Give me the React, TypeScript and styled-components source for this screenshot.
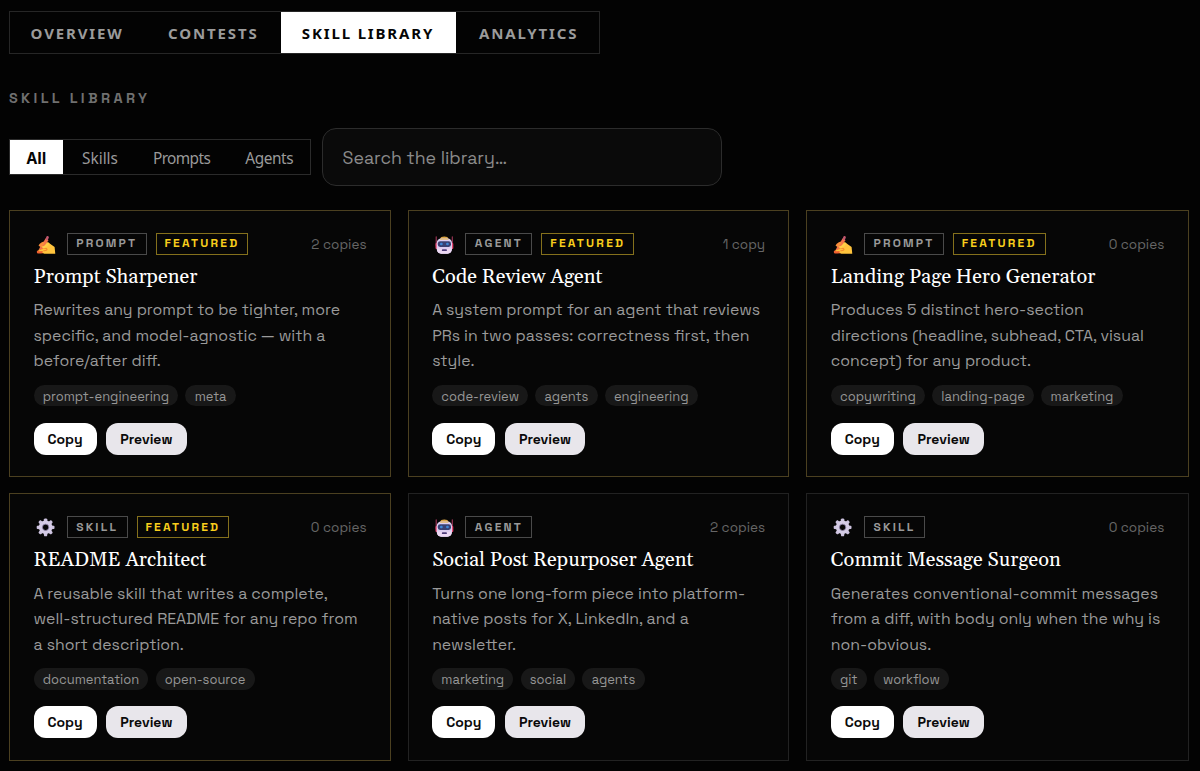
import React, { useState } from 'react';
import styled, { createGlobalStyle, css } from 'styled-components';

const grotesk = '"Space Grotesk", Inter, sans-serif';
const humanist = '"Noto Sans", "Open Sans", sans-serif';
const serif = 'Gelasio, Georgia, "Liberation Serif", serif';

const GlobalStyle = createGlobalStyle`
  * { box-sizing: border-box; }
  body { margin: 0; background: #030303; font-family: ${grotesk}; overflow: hidden; }
  button { font: inherit; border: 0; padding: 0; cursor: pointer; }
`;

const Page = styled.main`
  padding: 11px 0 10px 9px;
  height: 771px;
  background: #030303;
`;

const TabBar = styled.nav`
  display: flex;
  width: fit-content;
  height: 43px;
  border: 1px solid #262626;
`;

const Tab = styled.button<{ $active: boolean; $width: number; $inset: number }>`
  width: ${(p) => p.$width}px;
  padding: 1px 0 0 ${(p) => p.$inset}px;
  text-align: left;
  white-space: nowrap;
  font: 700 15px/1 ${humanist};
  letter-spacing: 1.85px;
  color: ${(p) => (p.$active ? '#050505' : '#9b9b9b')};
  background: ${(p) => (p.$active ? '#fff' : 'transparent')};
`;

const SectionLabel = styled.h2`
  margin: 34px 0 0;
  height: 20px;
  font: 600 14.4px/20px ${grotesk};
  letter-spacing: 3.38px;
  color: #707070;
`;

const Controls = styled.div`
  display: flex;
  align-items: center;
  gap: 11px;
  margin-top: 20px;
  height: 58px;
`;

const Segments = styled.div`
  display: flex;
  height: 36px;
  width: 302px;
  border: 1px solid #2b2b2b;
`;

const Segment = styled.button<{ $active: boolean; $track: number }>`
  flex: none;
  padding: 4px 17.5px 0;
  font: ${(p) => (p.$active ? 700 : 400)} 15.4px/1 ${humanist};
  letter-spacing: ${(p) => p.$track}px;
  color: ${(p) => (p.$active ? '#050505' : '#9a9a9a')};
  background: ${(p) => (p.$active ? '#fff' : 'transparent')};
  &:first-child {
    width: 53px;
    padding-left: 16px;
    padding-right: 16px;
    margin-right: 1.5px;
  }
`;

const Search = styled.input`
  width: 400px;
  height: 58px;
  padding: 2px 19px 0 19.5px;
  margin: 0;
  border: 1px solid #2c2c2c;
  border-radius: 14px;
  outline: 0;
  background: #0a0a0a;
  color: #ddd;
  font: 400 17.75px/1.3 ${grotesk};
  &::placeholder { color: #8b8b8b; opacity: 1; }
`;

const Grid = styled.section`
  display: grid;
  grid-template-columns: 381.9px 381.9px 382.4px;
  grid-auto-rows: 267.3px;
  gap: 16px 16.75px;
  margin: 24.2px 0 0 -0.1px;
`;

const Card = styled.article<{ $featured: boolean }>`
  padding: 21.8px 23.3px 0 23.6px;
  border: 1px solid ${(p) => (p.$featured ? '#4b4020' : '#222')};
  background: #060606;
`;

const CardHead = styled.header`
  display: flex;
  align-items: center;
  height: 22px;
`;

const IconSlot = styled.span`
  display: flex;
  width: 33.2px;
  padding: 2px 0 0 2.4px;
`;

const badge = css`
  display: flex;
  align-items: center;
  height: 22px;
  font: 700 12px/1 ${grotesk};
`;

const Kind = styled.span`
  ${badge}
  padding: 0 8.4px 1px 8.5px;
  border: 1px solid #4a4a4a;
  color: #999;
  letter-spacing: 2.2px;
`;

const Featured = styled.span`
  ${badge}
  padding: 0 7.9px 1px 7.9px;
  margin-left: 9px;
  border: 1px solid #84701c;
  color: #f8ce1c;
  letter-spacing: 2.2px;
`;

const Copies = styled.span`
  margin-left: auto;
  padding-top: 1px;
  font-size: 13.5px;
  color: #666;
`;

const Title = styled.h3`
  margin: 7.7px 0 0;
  font: 400 20px/28px ${serif};
  color: #fff;
`;

const Description = styled.p`
  margin: 6.6px -10px 0 0;
  font-size: 15.87px;
  line-height: 25.5px;
  color: #9a9a9a;
  white-space: pre-line;
`;

const Tags = styled.div`
  display: flex;
  gap: 7.2px;
  margin-top: 11.2px;
`;

const Tag = styled.span`
  height: 21.5px;
  padding: 0 9.2px;
  border-radius: 11px;
  background: #181818;
  color: #969696;
  font-size: 12.95px;
  line-height: 23px;
`;

const Actions = styled.div`
  display: flex;
  gap: 9.3px;
  margin-top: 16.4px;
`;

const Action = styled.button<{ $primary?: boolean }>`
  height: 32px;
  padding: 0 ${(p) => (p.$primary ? 14 : 14.4)}px;
  border-radius: 12px;
  background: ${(p) => (p.$primary ? '#fff' : '#e8e6eb')};
  color: #0a0a0a;
  font: 700 14px/32px ${grotesk};
`;

const WritingHand = () => (
  <svg width="20" height="20" viewBox="0 0 20 20" aria-hidden="true">
    <path d="M1.200 15.700c2.600-.9 3.600-.3 5.200-.2 1.500.1 2.300-.5 3.800-.4l1 2.500c-3.400.9-6.600 1.300-9.500.8-.9-.2-1.200-2.200-.5-2.700z" fill="#f0602f" />
    <path d="M6.700 8.100c2.300-1.400 4.500-1.500 6.300-.2l5.600 4.200.7 6.600H9.500c-1.500 0-3-.6-3.200-1.500-.1-.6.300-1 .9-1.200l-3.400.3c-1.700 0-1.800-1.400-.3-1.900l3.300-1.300z" fill="#ffc43d" />
    <path d="M3.200 14.700c2.100-.2 3.500-1.300 5.100-1.500 1.600-.2 2.800.4 2.700 1.400-.1.900-1.700 1-3.200 1.200" fill="none" stroke="#f58b2d" strokeWidth="1.100" strokeLinecap="round" />
    <path d="M3.400 13.300 9.600 3.500l2.900 1.800-5.800 8.200-3.500 1.800z" fill="#f3744a" />
    <path d="m9.400 3.900 1.300-2.600c.8-1 2.500 0 2.100 1.200l-1.100 2.900z" fill="#c0576e" />
    <path d="M2.600 10.800c.4-1.600 3-4 4.600-4.100 1.400.1 1.600 1.500.6 2.500L5 12.200z" fill="#f98d3b" />
    <path d="M5.500 11.400c2.200-.2 4.300-1.500 5.800-3.500 1.300-1 2.500.2 1.800 1.400-1.300 2.200-3.500 3.600-5.900 4.300" fill="#ffcf48" />
  </svg>
);

const Robot = () => (
  <svg width="20" height="20" viewBox="0 0 20 20" aria-hidden="true">
    <path d="M1.200 1.800v9M17.300 1.800v9" stroke="#a2375a" strokeWidth="1.100" strokeLinecap="round" />
    <rect x=".5" y="8" width="2.400" height="6" rx="1" fill="#e8456f" />
    <rect x="15.900" y="8" width="2.400" height="6" rx="1" fill="#e8456f" />
    <path d="M5 4.300C5.400 2 6.800 1.400 9.300 1.400s3.900.6 4.300 2.900z" fill="#d9a545" />
    <rect x="1.700" y="3.400" width="15.300" height="15.300" rx="4.600" fill="#dccdf0" />
    <path d="M5.200 3.800h8.200v1H5.200z" fill="#e3bd72" />
    <path d="M2 13.300c1.500 1 13.200 1 14.700 0v1.300c0 2.600-1.600 4.100-4.200 4.100H6.200C3.600 18.700 2 17.200 2 14.600z" fill="#edd9f4" />
    <rect x="2.800" y="6.300" width="13.200" height="5.600" rx="2.300" fill="#394173" />
    <rect x="5" y="7.800" width="2.700" height="2.500" rx="1.100" fill="#3c86d6" />
    <rect x="11.100" y="7.800" width="2.700" height="2.500" rx="1.100" fill="#3c86d6" />
    <rect x="6.900" y="14.200" width="5" height="1.900" rx=".7" fill="#4e3c79" />
  </svg>
);

const teeth = [0, 45, 90, 135, 180, 225, 270, 315];

const Gear = () => (
  <svg width="20" height="20" viewBox="0 0 20 20" aria-hidden="true">
    {teeth.map((a) => (
      <path key={a} d="M7.500 5 8 1.200c.1-.6.500-.8 1-.8h1.200c.5 0 .9.200 1 .8l.5 3.800z" fill="#cdc3df" transform={`rotate(${a} 9.600 9.300)`} />
    ))}
    <circle cx="9.600" cy="9.300" r="4.900" fill="none" stroke="#d5cce6" strokeWidth="3.600" />
    <circle cx="9.600" cy="9.300" r="3.200" fill="none" stroke="#8f83a8" strokeWidth=".8" />
  </svg>
);

type KindName = 'PROMPT' | 'AGENT' | 'SKILL';
const icons: Record<KindName, React.FC> = { PROMPT: WritingHand, AGENT: Robot, SKILL: Gear };

interface Item {
  kind: KindName;
  featured?: boolean;
  copies: string;
  title: string;
  text: string;
  tags: string[];
}

const items: Item[] = [
  { kind: 'PROMPT', featured: true, copies: '2 copies', title: 'Prompt Sharpener', text: 'Rewrites any prompt to be tighter, more\nspecific, and model-agnostic — with a\nbefore/after diff.', tags: ['prompt-engineering', 'meta'] },
  { kind: 'AGENT', featured: true, copies: '1 copy', title: 'Code Review Agent', text: 'A system prompt for an agent that reviews\nPRs in two passes: correctness first, then\nstyle.', tags: ['code-review', 'agents', 'engineering'] },
  { kind: 'PROMPT', featured: true, copies: '0 copies', title: 'Landing Page Hero Generator', text: 'Produces 5 distinct hero-section\ndirections (headline, subhead, CTA, visual\nconcept) for any product.', tags: ['copywriting', 'landing-page', 'marketing'] },
  { kind: 'SKILL', featured: true, copies: '0 copies', title: 'README Architect', text: 'A reusable skill that writes a complete,\nwell-structured README for any repo from\na short description.', tags: ['documentation', 'open-source'] },
  { kind: 'AGENT', copies: '2 copies', title: 'Social Post Repurposer Agent', text: 'Turns one long-form piece into platform-\nnative posts for X, LinkedIn, and a\nnewsletter.', tags: ['marketing', 'social', 'agents'] },
  { kind: 'SKILL', copies: '0 copies', title: 'Commit Message Surgeon', text: 'Generates conventional-commit messages\nfrom a diff, with body only when the why is\nnon-obvious.', tags: ['git', 'workflow'] },
];

const tabs = [
  { label: 'OVERVIEW', width: 137.5, inset: 20.6 },
  { label: 'CONTESTS', width: 133.5, inset: 20.6 },
  { label: 'SKILL LIBRARY', width: 175, inset: 20.8 },
  { label: 'ANALYTICS', width: 143, inset: 23 },
];

const filters = [
  { label: 'All', track: 0 },
  { label: 'Skills', track: 0 },
  { label: 'Prompts', track: -0.6 },
  { label: 'Agents', track: -0.4 },
];

export default function App() {
  const [tab, setTab] = useState('SKILL LIBRARY');
  const [filter, setFilter] = useState('All');
  return (
    <Page>
      <GlobalStyle />
      <TabBar>
        {tabs.map((t) => (
          <Tab key={t.label} $active={t.label === tab} $width={t.width} $inset={t.inset} onClick={() => setTab(t.label)}>{t.label}</Tab>
        ))}
      </TabBar>
      <SectionLabel>SKILL LIBRARY</SectionLabel>
      <Controls>
        <Segments>
          {filters.map((f) => (
            <Segment key={f.label} $active={f.label === filter} $track={f.track} onClick={() => setFilter(f.label)}>{f.label}</Segment>
          ))}
        </Segments>
        <Search placeholder="Search the library…" />
      </Controls>
      <Grid>
        {items.map((item) => {
          const Icon = icons[item.kind];
          return (
            <Card key={item.title} $featured={!!item.featured}>
              <CardHead>
                <IconSlot><Icon /></IconSlot>
                <Kind>{item.kind}</Kind>
                {item.featured && <Featured>FEATURED</Featured>}
                <Copies>{item.copies}</Copies>
              </CardHead>
              <Title>{item.title}</Title>
              <Description>{item.text}</Description>
              <Tags>{item.tags.map((t) => <Tag key={t}>{t}</Tag>)}</Tags>
              <Actions>
                <Action $primary>Copy</Action>
                <Action>Preview</Action>
              </Actions>
            </Card>
          );
        })}
      </Grid>
    </Page>
  );
}
